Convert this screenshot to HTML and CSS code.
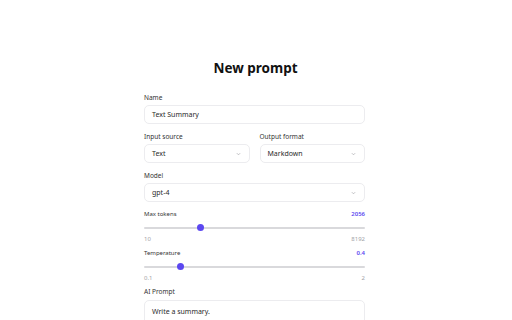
FILE: index.html
```html
<!DOCTYPE html>
<html>
<head>
<meta charset="utf-8">
<link rel="stylesheet" href="styles.css">
</head>
<body>
<main class="page">
  <h1 class="title">New prompt</h1>
  <form class="form">
    <div class="field">
      <label class="label">Name</label>
      <div class="box">Text Summary</div>
    </div>
    <div class="row">
      <div class="field">
        <label class="label">Input source</label>
        <div class="box select"><span>Text</span><svg class="chev" viewBox="0 0 6 4"><path d="M1 1 L3 3 L5 1" /></svg></div>
      </div>
      <div class="field">
        <label class="label">Output format</label>
        <div class="box select"><span>Markdown</span><svg class="chev" viewBox="0 0 6 4"><path d="M1 1 L3 3 L5 1" /></svg></div>
      </div>
    </div>
    <div class="field">
      <label class="label">Model</label>
      <div class="box select"><span>gpt-4</span><svg class="chev" viewBox="0 0 6 4"><path d="M1 1 L3 3 L5 1" /></svg></div>
    </div>
    <div class="slider">
      <div class="slider-head"><span>Max tokens</span><span class="value">2056</span></div>
      <div class="track"><div class="fill" style="width:25.7%"><span class="thumb"></span></div></div>
      <div class="range"><span>10</span><span>8192</span></div>
    </div>
    <div class="slider">
      <div class="slider-head"><span>Temperature</span><span class="value">0.4</span></div>
      <div class="track"><div class="fill" style="width:16.5%"><span class="thumb"></span></div></div>
      <div class="range"><span>0.1</span><span>2</span></div>
    </div>
    <div class="field prompt">
      <label class="label">AI Prompt</label>
      <div class="box area">Write a summary.</div>
    </div>
  </form>
</main>
</body>
</html>
```
FILE: styles.css
```css
html, body {
  margin: 0;
  padding: 0;
  background: #ffffff;
  font-family: "Noto Sans", "Open Sans", sans-serif;
  color: #1f2328;
  overflow: hidden;
}
.page {
  width: 221px;
  margin-left: 144px;
}
.title {
  margin: 59px 0 0 0;
  font-size: 13.5px;
  line-height: 18px;
  font-weight: 700;
  text-align: center;
  color: #111111;
  padding-left: 2px;
}
.form {
  margin-top: 15.5px;
  display: flex;
  flex-direction: column;
}
.field {
  display: flex;
  flex-direction: column;
  margin-bottom: 7.5px;
}
.label {
  font-size: 6.5px;
  line-height: 9px;
  color: #333333;
  margin-bottom: 3.5px;
}
.box {
  box-sizing: border-box;
  height: 19px;
  border: 1px solid #ececef;
  border-radius: 5px;
  padding: 0 7px;
  display: flex;
  align-items: center;
  font-size: 7px;
  color: #2b2b2b;
}
.select {
  justify-content: space-between;
}
.chev {
  width: 5px;
  height: 4px;
  margin-right: 1px;
}
.chev path {
  fill: none;
  stroke: #a3a3a8;
  stroke-width: 0.8;
}
.row {
  display: grid;
  grid-template-columns: 1fr 1fr;
  column-gap: 10px;
}
.slider {
  display: flex;
  flex-direction: column;
}
.slider-head {
  display: flex;
  justify-content: space-between;
  font-size: 6px;
  line-height: 8px;
  color: #333333;
}
.value {
  color: #5b47f0;
  font-weight: 600;
}
.track {
  position: relative;
  height: 2px;
  margin: 9px 0 6px 0;
  background: #d9d9dc;
  border-radius: 1px;
}
.fill {
  position: relative;
  height: 2px;
}
.thumb {
  position: absolute;
  right: -3.5px;
  top: -2.5px;
  width: 7px;
  height: 7px;
  border-radius: 50%;
  background: #5b47f0;
}
.range {
  display: flex;
  justify-content: space-between;
  font-size: 6px;
  line-height: 8px;
  color: #a3a3a8;
  margin-bottom: 6px;
}
.slider + .prompt {
  margin-top: -0.5px;
}
.area {
  height: 40px;
  align-items: flex-start;
  padding-top: 6px;
}
```
